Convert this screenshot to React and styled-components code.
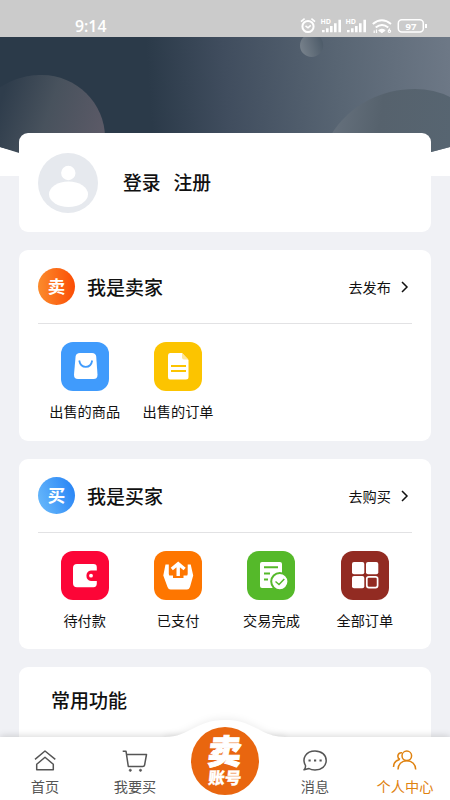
import React from 'react';
import styled, { createGlobalStyle } from 'styled-components';

const GlobalStyle = createGlobalStyle`
    * {
        box-sizing: border-box;
    }

    body {
        margin: 0;
        background-color: #f0f1f5;
        font-family: "Noto Sans CJK SC", "Noto Sans", sans-serif;
        color: #111;
    }

    svg {
        display: block;
        flex-shrink: 0;
    }
`;

const Screen = styled.div`
    width: 450px;
    height: 800px;
    display: flex;
    flex-direction: column;
    overflow: hidden;
    background-color: #f0f1f5;
`;

const StatusBar = styled.header`
    height: 37px;
    flex-shrink: 0;
    display: flex;
    justify-content: space-between;
    padding: 16px 22px 0 75px;
    background-color: #cbcbcb;
`;

const Clock = styled.span`
    font: 600 15.8px/20px "Open Sans", sans-serif;
    color: white;
`;

const BannerDiv = styled.div`
    height: 139px;
    flex-shrink: 0;
`;

const Content = styled.main`
    flex: 1;
    min-height: 0;
    overflow: hidden;
    display: flex;
    flex-direction: column;
    gap: 18px;
    margin-top: -43px;
    padding: 0 19px;
`;

const Card = styled.section`
    height: ${props => props.$height}px;
    flex-shrink: 0;
    padding: 0 19px;
    border-radius: 9px;
    background-color: white;
`;

const LoginCard = styled(Card)`
    display: flex;
    align-items: center;
    gap: 25px;
`;

const LoginLinks = styled.div`
    display: flex;
    gap: 13px;
    padding-bottom: 1px;
    font-size: 18.8px;
    font-weight: 500;
    line-height: 28px;
`;

const CardHeader = styled.div`
    height: 74px;
    display: flex;
    align-items: center;
    border-bottom: 1px solid #e2e2e4;
`;

const Badge = styled.span`
    width: 37px;
    height: 37px;
    margin-right: 12px;
    border-radius: 50%;
    background: ${props => props.$fill};
    color: white;
    font-size: 17.5px;
    font-weight: 700;
    line-height: 35px;
    text-align: center;
`;

const Title = styled.h2`
    margin: 0;
    font-size: 19px;
    font-weight: 500;
    line-height: 28px;
`;

const MoreLink = styled.a`
    margin-left: auto;
    padding-right: 3px;
    display: flex;
    align-items: center;
    gap: 9px;
    font-size: 14.2px;
    line-height: 20px;
`;

const Grid = styled.div`
    display: grid;
    grid-template-columns: repeat(4, 93.4px);
    padding-top: 18px;
`;

const GridItem = styled.div`
    display: flex;
    flex-direction: column;
    align-items: center;
    gap: 9px;
    font-size: 14.2px;
    line-height: 22px;
    white-space: nowrap;
`;

const Tile = styled.div`
    width: 48px;
    height: 49px;
    border-radius: 12px;
    background-color: ${props => props.$color};
`;

const CommonTitle = styled(Title)`
    padding: 19px 0 0 13px;
`;

const TabBar = styled.nav`
    position: relative;
    height: 63px;
    flex-shrink: 0;
    display: grid;
    grid-template-columns: repeat(5, 90px);
    background-color: white;
    box-shadow: 0 -1px 7px rgba(0, 0, 0, 0.16);
`;

const Tab = styled.a`
    display: flex;
    flex-direction: column;
    align-items: center;
    padding-top: 11px;
    gap: 3px;
    font-size: 14.2px;
    line-height: 20px;
    color: ${props => props.$active ? '#df8210' : '#555'};
`;

const Bump = styled.svg`
    position: absolute;
    left: 165px;
    top: -24px;
    filter: drop-shadow(0 -2px 3px rgba(0, 0, 0, 0.06));
    clip-path: inset(-10px -10px 16px -10px);
`;

const SellButton = styled.button`
    position: absolute;
    left: 191px;
    top: -10px;
    width: 68px;
    height: 68px;
    padding: 0 0 4px;
    border: none;
    border-radius: 50%;
    background-color: #e9660f;
    color: white;
    font-family: inherit;
    font-weight: 900;
    text-align: center;
`;

const SellText = styled.span`
    display: block;
    font-size: ${props => props.$size}px;
    line-height: ${props => props.$line}px;
    transform: skewX(-6deg);
    -webkit-text-stroke: ${props => props.$stroke}px white;
`;

const StatusIcons = () => (
    <svg width="130" height="20" viewBox="298 16 130 20" fill="none" stroke="white">
        <circle cx="308" cy="26.5" r="5.6" strokeWidth="2" />
        <path d="M305.5 25.8l2.5 2 2.8-2.4M301 21.7l3.6-3M315 21.7l-3.6-3" strokeWidth="1.6" />
        {[321, 346].map(x => (
            <g key={x}>
                <text x={x - 0.5} y="24" fill="white" stroke="none" fontFamily="Open Sans" fontSize="7" fontWeight="700">HD</text>
                <path d={`M${x + 2.3} 32.3v-2.3M${x + 6.3} 32.3v-4M${x + 10.3} 32.3v-6.2M${x + 14.3} 32.3v-9M${x + 18.7} 32.3v-12.5`} strokeWidth="2.6" />
            </g>
        ))}
        <path d="M372.8 24q9-7.5 18.2 0M375.7 27.5q6.3-5 12.6 0" strokeWidth="2" />
        <path d="M378.6 30.4q3.4-2.6 6.6 0l-3.3 2.3z" fill="white" strokeWidth="1" />
        <path d="M374.2 30.5v2.5M376.5 29.5v3.5M389.8 28.5l-1.5 2.5" strokeWidth="1.2" />
        <circle cx="389.4" cy="31.3" r="1.2" strokeWidth="1.2" />
        <rect x="398.3" y="19.8" width="25" height="12.1" rx="3.5" strokeWidth="1.5" />
        <path d="M426 24v4" strokeWidth="2" />
        <text x="410.9" y="29.5" fill="white" stroke="none" fontFamily="Open Sans" fontSize="9.5" fontWeight="700" textAnchor="middle">97</text>
    </svg>
);

const Banner = () => (
    <svg width="450" height="139" viewBox="0 37 450 139">
        <defs>
            <linearGradient id="sky" gradientUnits="userSpaceOnUse" x1="0" y1="90" x2="450" y2="60">
                <stop offset="0" stopColor="#2b3a49" />
                <stop offset="0.33" stopColor="#2b3a49" />
                <stop offset="0.5" stopColor="#404d5e" />
                <stop offset="0.75" stopColor="#586573" />
                <stop offset="1" stopColor="#6d7886" />
            </linearGradient>
            <linearGradient id="left" x1="0" y1="0.3" x2="1" y2="0.6">
                <stop offset="0" stopColor="#2f3d4c" />
                <stop offset="0.45" stopColor="#48525d" />
                <stop offset="1" stopColor="#5c5a67" />
            </linearGradient>
            <linearGradient id="right" x1="0" y1="0.5" x2="1" y2="0.6">
                <stop offset="0" stopColor="#65707c" />
                <stop offset="0.4" stopColor="#56626d" />
                <stop offset="1" stopColor="#576571" />
            </linearGradient>
            <linearGradient id="ball" x1="0" y1="0.6" x2="1" y2="0.3">
                <stop offset="0" stopColor="#77818b" />
                <stop offset="1" stopColor="#4c5a68" />
            </linearGradient>
        </defs>
        <path d="M0 37h450v139H0z" fill="white" />
        <path d="M0 37h450v110Q225 212 0 147z" fill="url(#sky)" />
        <path d="M0 87.5C17 76 33 75 42 75C76 75 105 103 105 137.5L100 170Q50 164 0 147z" fill="url(#left)" />
        <path d="M331 135C350 104 382 89 415 89Q434 89 450 97v50Q385 165 331 170z" fill="url(#right)" />
        <circle cx="311.6" cy="45.4" r="11.6" fill="url(#ball)" />
    </svg>
);

const Avatar = () => (
    <svg width="60" height="60" viewBox="0 0 60 60">
        <circle cx="30" cy="30" r="30" fill="#e6e9ee" />
        <circle cx="30.3" cy="20" r="7.2" fill="white" />
        <ellipse cx="30.5" cy="41.3" rx="19.5" ry="12.7" fill="white" />
    </svg>
);

const Chevron = () => (
    <svg width="9" height="14" viewBox="0 0 9 14" fill="none" stroke="#111" strokeWidth="1.5">
        <path d="M2 2l5 5-5 5" />
    </svg>
);

/* tile glyphs share a 48x49 canvas */
const glyphs = {
    bag: color => (
        <>
            <path d="M19 11h12q3.800 0 4.200 3.500l1.300 18q.2 4.500-4 4.500h-15.500q-4.200 0-4-4.500l1.600-18Q15 11 19 11z" fill="white" />
            <path d="M18.2 18.5c1.700 8.500 11.500 8.500 13 0" fill="none" stroke={color} strokeWidth="1.8" />
        </>
    ),
    file: color => (
        <>
            <path d="M16 11h12l6.500 7v17q0 2.500-2.500 2.500H16q-2 0-2-2.500V13.500Q14 11 16 11z" fill="white" />
            <path d="M28 11v4.500q0 2 2 2h4.500z" fill="#ffe698" />
            <path d="M17 24h15M17 29h15" stroke={color} strokeWidth="2" />
        </>
    ),
    wallet: () => (
        <>
            <path d="M16 13h16.500q3.300 0 3.300 3.300v3.200H30a5.300 5.300 0 0 0 0 10.500h5.800v2.500q0 3.700-3.300 3.700H16q-4 0-4-4V17q0-4 4-4z" fill="white" />
            <circle cx="30" cy="24.7" r="1.9" fill="white" />
        </>
    ),
    upload: () => (
        <>
            <path d="M11.5 13.5h3.300v9.500l.5 1.500h3.700v2.500h10.500v-2.500h3.700l.5-1.500v-9.500h3l2.500 11-3.200 11.500q-1 2.500-3 2.500H16.500q-2 0-3-2.500L9.300 24.500z" fill="white" />
            <path d="M24.2 25V13.500M17.8 18l6.400-5.200L30.6 18" fill="none" stroke="white" strokeWidth="3.4" />
        </>
    ),
    done: color => (
        <>
            <rect x="13" y="11" width="22" height="26" rx="2" fill="white" />
            <path d="M17 16.200h14M17 22.500h6M17 28.500h4" stroke={color} strokeWidth="1.9" />
            <circle cx="32.8" cy="30.6" r="8.6" fill="white" stroke={color} strokeWidth="2" />
            <path d="M28.5 30.500l3.500 3 5.300-5.500" fill="none" stroke={color} strokeWidth="1.5" />
        </>
    ),
    all: () => (
        <>
            <rect x="11" y="11" width="12.3" height="12.3" rx="2" fill="white" />
            <rect x="25" y="11" width="12.3" height="12.3" rx="2" fill="white" />
            <rect x="11" y="25" width="12.3" height="12.3" rx="2" fill="white" />
            <rect x="25.8" y="25.8" width="10.8" height="10.8" rx="2" fill="none" stroke="white" strokeWidth="1.7" />
        </>
    ),
};

const tabIcons = {
    home: <path d="M3 10.300L13 2l10.300 8.300M4.700 20.700v-5.400L13 8.300l8.300 7v5.400z" />,
    cart: (
        <>
            <path d="M.7 2.200H4l2.300 15.300h14.500q1.500 0 1.800-1.500L24.500 5.500H4.500" />
            <circle cx="8.3" cy="21.3" r="1.1" fill="currentColor" strokeWidth="0.7" />
            <circle cx="18.5" cy="21.3" r="1.1" fill="currentColor" strokeWidth="0.7" />
        </>
    ),
    chat: (
        <>
            <path d="M3.5 16.500C-.5 9.500 4 2 13 2c6.500 0 11.200 4 11.200 9.500S19.500 21 13 21c-2.500 0-4.500-.5-6-1.500l-5 1.300q1.800-1.500 1.500-4.300z" />
            <path d="M6.500 11.500h2.200M12 11.500h2.200M17.500 11.500h2.200" strokeWidth="2.2" />
        </>
    ),
    people: (
        <>
            <circle cx="14.8" cy="6.8" r="4.8" />
            <path d="M6 20.500c0-5 3.500-8.700 8.800-8.700s8.900 3.700 8.900 8.700M10 3.700C5.500 3.300 4.500 8.700 8 10.500M1.500 18c0-4 2-6.500 6-7.500" />
        </>
    ),
};

const TabItem = ({ icon, label, active }) => (
    <Tab $active={active}>
        <svg width="26" height="25" viewBox="0 0 26 23" fill="none" stroke="currentColor" strokeWidth="1.5" strokeLinejoin="round">
            {tabIcons[icon]}
        </svg>
        {label}
    </Tab>
);

const RoleCard = ({ height, badge, fill, title, more, items }) => (
    <Card $height={height}>
        <CardHeader>
            <Badge $fill={fill}>{badge}</Badge>
            <Title>{title}</Title>
            <MoreLink>{more}<Chevron /></MoreLink>
        </CardHeader>
        <Grid>
            {items.map(item => (
                <GridItem key={item.label}>
                    <Tile $color={item.color}>
                        <svg width="48" height="49" viewBox="0 0 48 49">{glyphs[item.icon](item.color)}</svg>
                    </Tile>
                    {item.label}
                </GridItem>
            ))}
        </Grid>
    </Card>
);

const sellerItems = [
    { icon: 'bag', color: '#409bfc', label: '出售的商品' },
    { icon: 'file', color: '#fcc400', label: '出售的订单' },
];

const buyerItems = [
    { icon: 'wallet', color: '#fc0537', label: '待付款' },
    { icon: 'upload', color: '#fe7600', label: '已支付' },
    { icon: 'done', color: '#55b92a', label: '交易完成' },
    { icon: 'all', color: '#922b22', label: '全部订单' },
];

const App = () => {
    return (
        <Screen>
            <GlobalStyle />
            <StatusBar>
                <Clock>9:14</Clock>
                <StatusIcons />
            </StatusBar>
            <BannerDiv><Banner /></BannerDiv>
            <Content>
                <LoginCard $height={99}>
                    <Avatar />
                    <LoginLinks>
                        <span>登录</span>
                        <span>注册</span>
                    </LoginLinks>
                </LoginCard>
                <RoleCard
                    height={191}
                    badge="卖"
                    fill="linear-gradient(90deg, #fb8b2c, #fb4d05)"
                    title="我是卖家"
                    more="去发布"
                    items={sellerItems}
                />
                <RoleCard
                    height={190}
                    badge="买"
                    fill="linear-gradient(70deg, #6cbcfb, #2380f5)"
                    title="我是买家"
                    more="去购买"
                    items={buyerItems}
                />
                <Card $height={190}>
                    <CommonTitle>常用功能</CommonTitle>
                </Card>
            </Content>
            <TabBar>
                <Bump width="120" height="40" viewBox="0 0 120 40">
                    <path d="M0 24C25 24 30 7 60 7s35 17 60 17v16H0z" fill="white" />
                </Bump>
                <TabItem icon="home" label="首页" />
                <TabItem icon="cart" label="我要买" />
                <SellButton>
                    <SellText $size={34} $line={36} $stroke={1}>卖</SellText>
                    <SellText $size={16.5} $line={19} $stroke={0.3}>账号</SellText>
                </SellButton>
                <span />
                <TabItem icon="chat" label="消息" />
                <TabItem icon="people" label="个人中心" active />
            </TabBar>
        </Screen>
    );
};

export default App;
